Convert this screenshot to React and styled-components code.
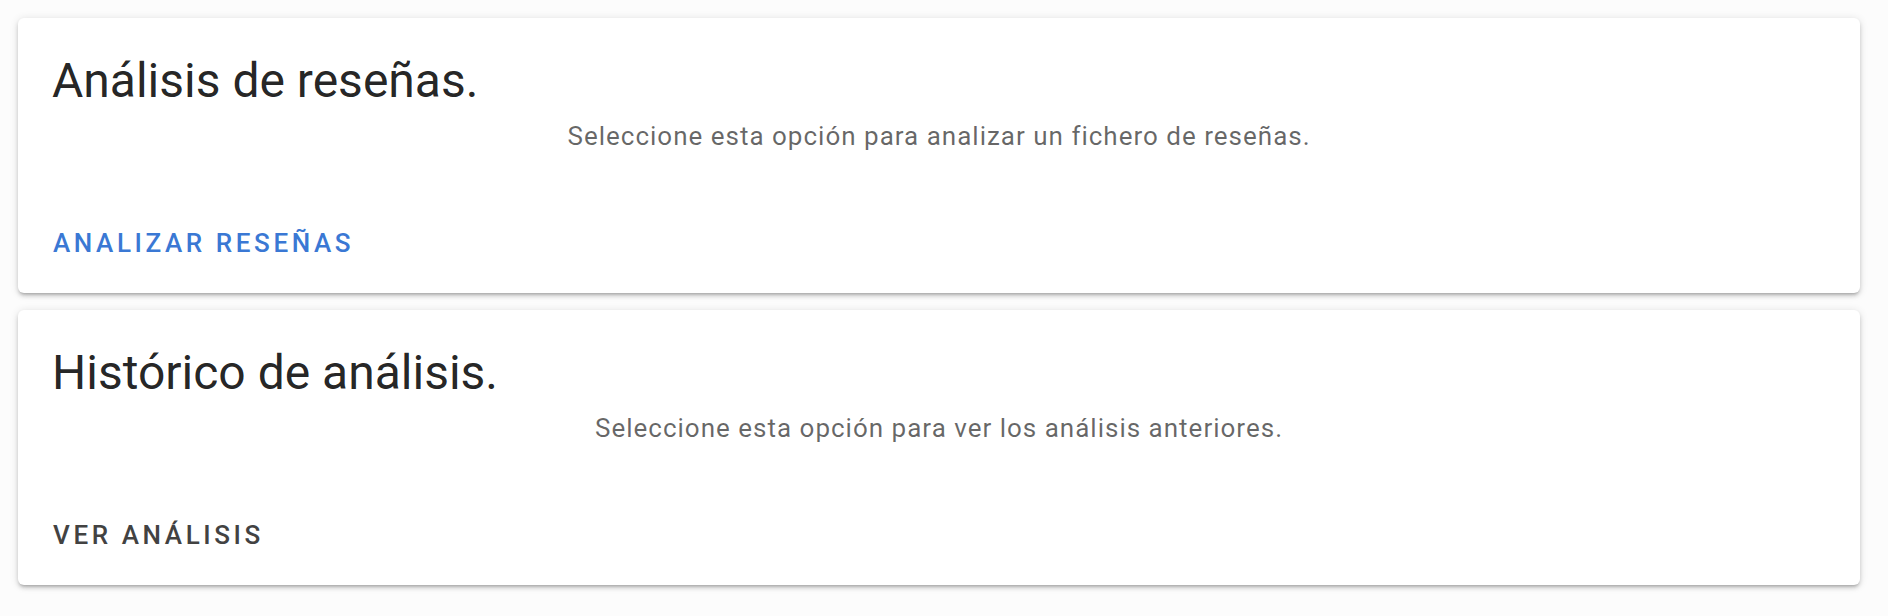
import React from "react";
import styled, { createGlobalStyle } from "styled-components";

const GlobalStyle = createGlobalStyle`
  html, body {
    margin: 0;
    padding: 0;
    background: #fcfcfc;
    font-family: Roboto, "Noto Sans", "Liberation Sans", sans-serif;
  }
`;

const Page = styled.main`
  display: flex;
  flex-direction: column;
  gap: 17px;
  padding: 18px 28px 18px 18px;
`;

const Card = styled.section`
  display: flex;
  flex-direction: column;
  height: 275px;
  box-sizing: border-box;
  background: #ffffff;
  border-radius: 6px;
  box-shadow: 0px 3px 3px -2px rgba(0, 0, 0, 0.2),
    0px 3px 4px 0px rgba(0, 0, 0, 0.14), 0px 1px 8px 0px rgba(0, 0, 0, 0.12);
  padding: 35px 34px 0 34px;
`;

const Title = styled.h2`
  margin: 0;
  font-family: Roboto, sans-serif;
  font-weight: 400;
  font-size: 48px;
  line-height: 56px;
  color: rgba(0, 0, 0, 0.87);
`;

const Description = styled.p`
  margin: 9px 0 0 0;
  font-family: Roboto, sans-serif;
  font-weight: 400;
  font-size: 26px;
  line-height: 36px;
  letter-spacing: 1px;
  text-align: center;
  color: rgba(0, 0, 0, 0.6);
`;

const Actions = styled.div`
  display: flex;
  align-items: center;
  margin-top: auto;
  padding-bottom: 29px;
`;

const ActionButton = styled.button`
  border: none;
  background: transparent;
  padding: 0;
  margin-left: 1px;
  cursor: pointer;
  font-family: Roboto, sans-serif;
  font-weight: 500;
  font-size: 26px;
  line-height: 42px;
  letter-spacing: 3.6px;
  text-transform: uppercase;
  color: ${(p) => (p.$primary ? "#3a78d4" : "#424242")};
`;

const items = [
  {
    title: "Análisis de reseñas.",
    text: "Seleccione esta opción para analizar un fichero de reseñas.",
    action: "Analizar reseñas",
    primary: true,
  },
  {
    title: "Histórico de análisis.",
    text: "Seleccione esta opción para ver los análisis anteriores.",
    action: "Ver análisis",
    primary: false,
  },
];

export default function App() {
  return (
    <>
      <GlobalStyle />
      <Page>
        {items.map((it) => (
          <Card key={it.title}>
            <Title>{it.title}</Title>
            <Description>{it.text}</Description>
            <Actions>
              <ActionButton $primary={it.primary}>{it.action}</ActionButton>
            </Actions>
          </Card>
        ))}
      </Page>
    </>
  );
}
